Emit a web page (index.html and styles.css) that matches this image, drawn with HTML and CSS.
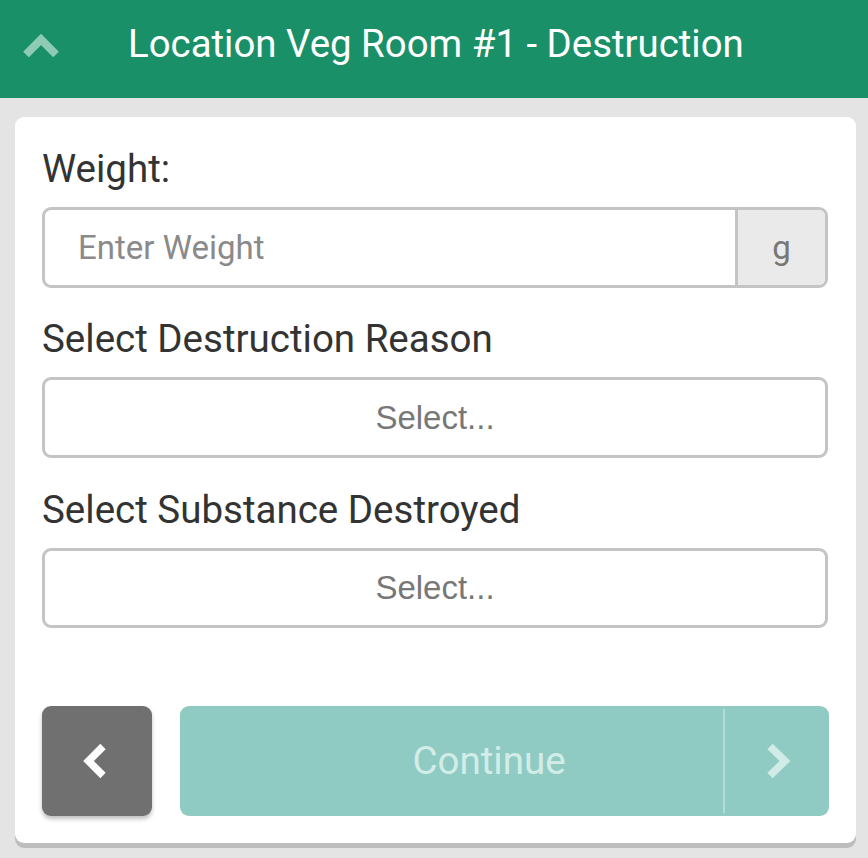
FILE: index.html
```html
<!DOCTYPE html>
<html>
<head>
<meta charset="utf-8">
<link rel="stylesheet" href="styles.css">
</head>
<body>
<header class="topbar">
  <svg class="up-icon" width="60" height="60" viewBox="0 0 60 60"><polyline points="26,54.5 41,39.5 56,54.5" fill="none" stroke="#8ecbb5" stroke-width="8" stroke-linejoin="miter" stroke-linecap="butt" transform="translate(-15,-20)"/></svg>
  <h1 class="title">Location Veg Room #1 - Destruction</h1>
</header>
<main class="card">
  <label class="label label-weight">Weight:</label>
  <div class="input-group">
    <div class="input">Enter Weight</div>
    <div class="addon">g</div>
  </div>
  <label class="label">Select Destruction Reason</label>
  <div class="select">Select...</div>
  <label class="label">Select Substance Destroyed</label>
  <div class="select">Select...</div>
  <div class="actions">
    <button class="btn-back">
      <svg width="40" height="50" viewBox="0 0 40 50"><polyline points="26,10.5 11.5,25 26,39.5" fill="none" stroke="#ffffff" stroke-width="7.5" stroke-linejoin="miter"/></svg>
    </button>
    <button class="btn-continue">
      <span class="continue-text">Continue</span>
      <span class="continue-arrow">
        <svg width="40" height="50" viewBox="0 0 40 50"><polyline points="13,10.5 28,25 13,39.5" fill="none" stroke="#d1ece6" stroke-width="7.5" stroke-linejoin="miter"/></svg>
      </span>
    </button>
  </div>
</main>
</body>
</html>
```
FILE: styles.css
```css
* { box-sizing: border-box; }
html, body { margin: 0; padding: 0; }
body {
  background: #e4e4e4;
  font-family: Roboto, "Liberation Sans", sans-serif;
  width: 868px;
  height: 858px;
  overflow: hidden;
}
.topbar {
  height: 98px;
  background: #1a9069;
  display: flex;
  align-items: center;
  position: relative;
}
.up-icon {
  position: absolute;
  left: 15px;
  top: 20px;
}
.title {
  margin: 0 0 0 128px;
  color: #ffffff;
  font-weight: 400;
  font-size: 38.4px;
  line-height: 40px;
  position: relative;
  top: -5px;
}
.card {
  margin: 19px 12px 0 15px;
  background: #ffffff;
  border-radius: 9px;
  box-shadow: 0 5px 0 #bdbdbd;
  padding: 0 27px 27px 27px;
  display: flex;
  flex-direction: column;
  height: 726px;
}
.label {
  display: block;
  font-size: 38.5px;
  line-height: 44px;
  color: #333333;
  margin-top: 29.5px;
  margin-bottom: 16px;
}
.label-weight {
  margin-top: 30px;
}
.input-group {
  display: flex;
  height: 81px;
  border: 3px solid #c4c4c4;
  border-radius: 9px;
  overflow: hidden;
  margin-right: 1px;
}
.input {
  flex: 1;
  padding-left: 33px;
  display: flex;
  align-items: center;
  font-size: 33px;
  color: #8a8a8a;
}
.addon {
  width: 90px;
  border-left: 3px solid #c4c4c4;
  background: #eaeaea;
  display: flex;
  align-items: center;
  justify-content: center;
  font-size: 33px;
  color: #777777;
}
.select {
  height: 81px;
  border: 3px solid #c4c4c4;
  border-radius: 9px;
  display: flex;
  align-items: center;
  justify-content: center;
  font-family: "Liberation Sans", Arial, sans-serif;
  font-size: 33px;
  color: #777777;
  margin-right: 1px;
}
.actions {
  margin-top: 77.5px;
  display: flex;
  gap: 28px;
  height: 110px;
}
.btn-back {
  width: 110px;
  height: 110px;
  border: none;
  border-radius: 9px;
  background: #707070;
  box-shadow: 0 3px 4px rgba(0,0,0,0.25);
  display: flex;
  align-items: center;
  justify-content: center;
  padding: 0;
}
.btn-continue {
  flex: 1;
  height: 110px;
  border: none;
  border-radius: 9px;
  background: #8fcbc3;
  display: flex;
  align-items: stretch;
  padding: 3px 0;
  font-family: Roboto, sans-serif;
}
.continue-text {
  flex: 1;
  display: flex;
  align-items: center;
  justify-content: center;
  padding-left: 75px;
  font-size: 38.5px;
  color: #d2ede7;
}
.continue-arrow {
  width: 106px;
  border-left: 2px solid #b2ddd6;
  display: flex;
  align-items: center;
  justify-content: center;
}
```
